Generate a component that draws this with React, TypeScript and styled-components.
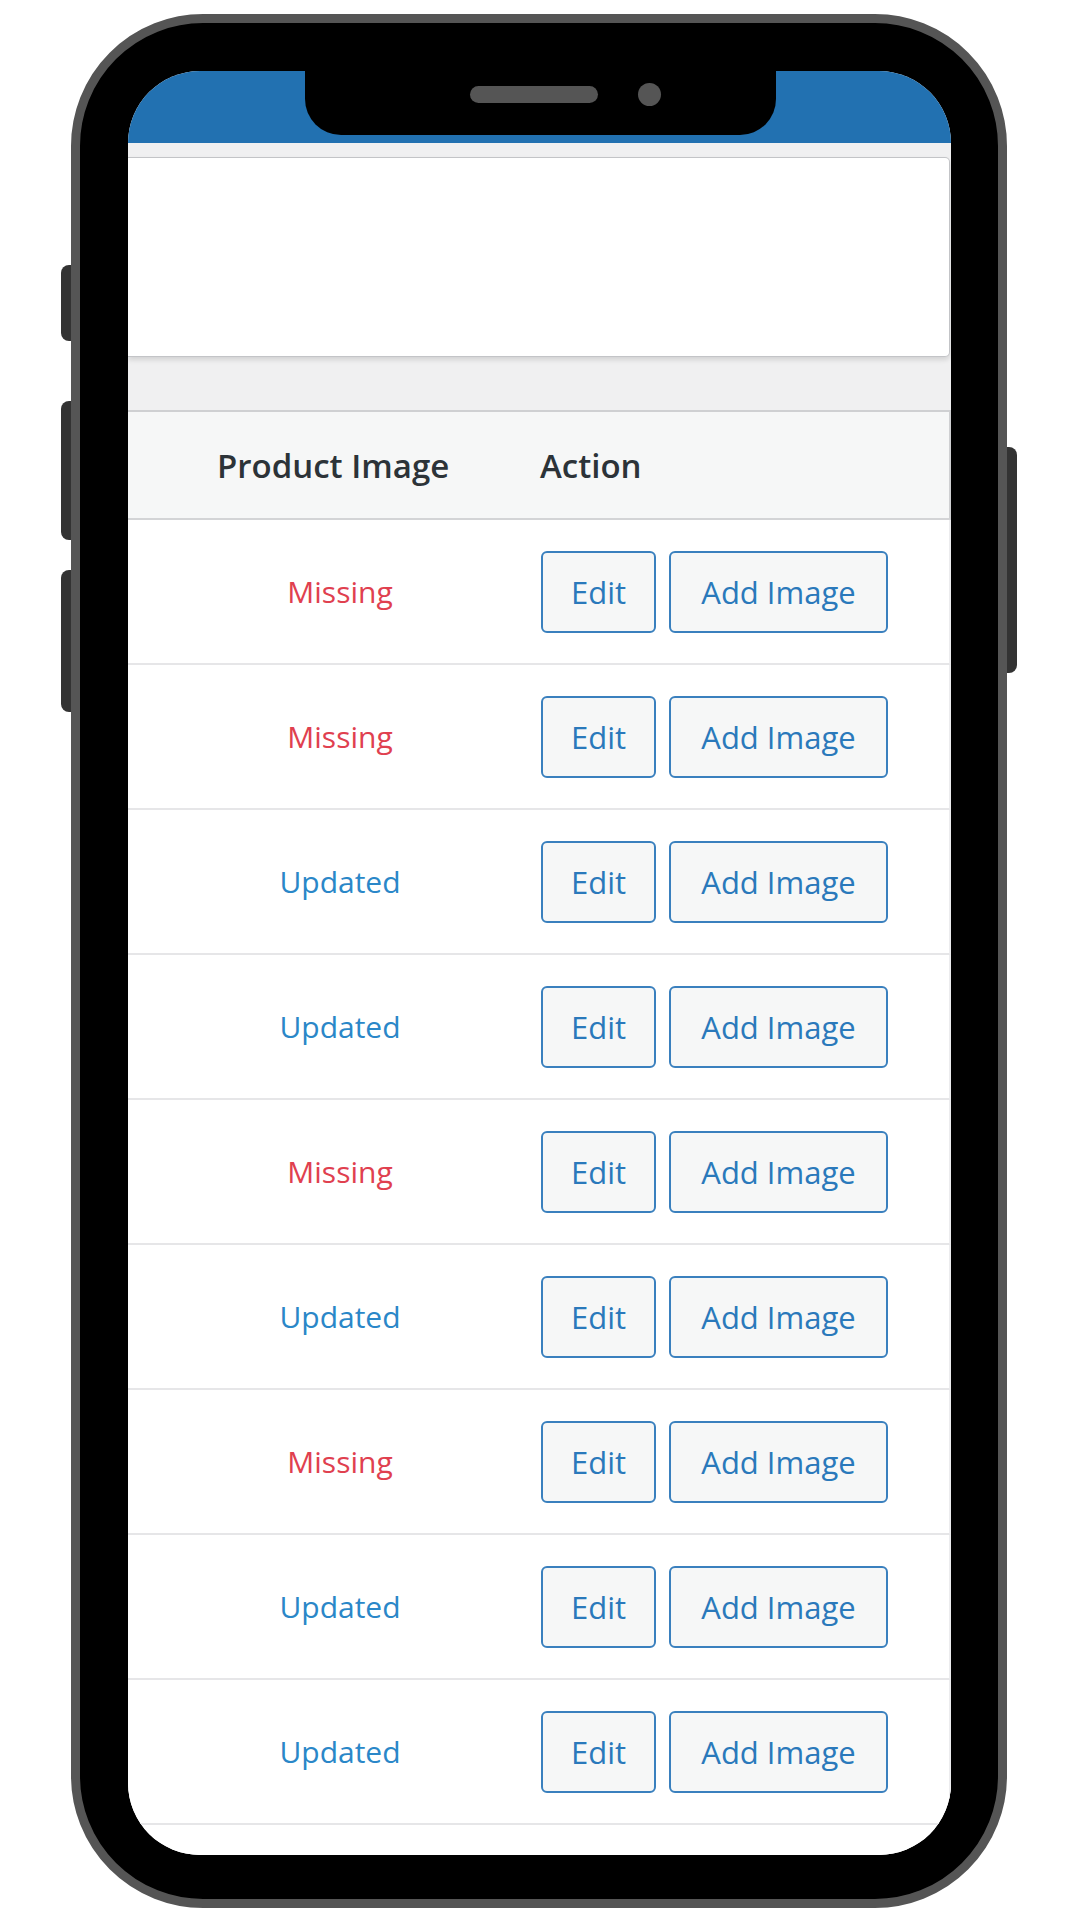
import React from 'react'
import styled, { createGlobalStyle } from 'styled-components'

type Status = 'Missing' | 'Updated'

const rows: Status[] = [
  'Missing',
  'Missing',
  'Updated',
  'Updated',
  'Missing',
  'Updated',
  'Missing',
  'Updated',
  'Updated',
]

const GlobalStyle = createGlobalStyle`
  html, body {
    margin: 0;
    padding: 0;
    background: #fff;
  }
  body {
    font-family: 'Open Sans', 'Noto Sans', sans-serif;
  }
`

const Page = styled.div`
  width: 1080px;
  height: 1920px;
  box-sizing: border-box;
  padding: 14px 0 0 71px;
  overflow: hidden;
`

const Phone = styled.div`
  position: relative;
  width: 936px;
  height: 1894px;
  box-sizing: border-box;
  padding: 48px 47px 44px 48px;
  background: #000;
  border: 9px solid #555;
  border-radius: 132px;
`

const SideKey = styled.div<{ $side: 'left' | 'right'; $top: number; $h: number }>`
  position: absolute;
  top: ${(p) => p.$top}px;
  height: ${(p) => p.$h}px;
  width: 10px;
  background: #333;
  ${(p) =>
    p.$side === 'left'
      ? 'left: -19px; border-radius: 8px 0 0 8px;'
      : 'right: -19px; border-radius: 0 8px 8px 0;'}
`

const Screen = styled.div`
  position: relative;
  width: 823px;
  height: 1784px;
  display: flex;
  flex-direction: column;
  background: #fff;
  border-radius: 72px;
  overflow: hidden;
`

const Notch = styled.div`
  position: absolute;
  top: 0;
  left: 177px;
  width: 471px;
  height: 64px;
  box-sizing: border-box;
  padding: 0 0 17px 165px;
  display: flex;
  align-items: center;
  gap: 40px;
  background: #000;
  border-radius: 0 0 36px 36px;
`

const Speaker = styled.div`
  width: 128px;
  height: 17px;
  border-radius: 9px;
  background: #555;
`

const Camera = styled.div`
  width: 23px;
  height: 23px;
  border-radius: 50%;
  background: #555;
`

const AdminBar = styled.div`
  flex-shrink: 0;
  height: 72px;
  background: #2271b1;
`

const TopArea = styled.div`
  flex-shrink: 0;
  padding: 14px 1px 53px 0;
  background: #f0f0f1;
`

const Card = styled.div`
  height: 200px;
  box-sizing: border-box;
  background: #fff;
  border: 1px solid #c3c4c7;
  border-left: none;
  border-radius: 0 5px 5px 0;
  box-shadow: 0 3px 5px rgba(0, 0, 0, 0.12);
`

const Table = styled.div`
  flex: 1;
  background: #fff;
`

const HeadRow = styled.div`
  height: 110px;
  box-sizing: border-box;
  display: grid;
  grid-template-columns: 246px 1fr;
  column-gap: 77px;
  align-items: center;
  padding-left: 89px;
  background: #f6f7f7;
  border-top: 2px solid #cfd0d2;
  border-bottom: 2px solid #d3d4d6;
  border-right: 2px solid #cfd0d2;
`

const HeadCell = styled.div`
  font-size: 33px;
  font-weight: 600;
  color: #2c3338;
  white-space: nowrap;
`

const Row = styled.div`
  height: 145px;
  box-sizing: border-box;
  display: grid;
  grid-template-columns: 246px 1fr;
  column-gap: 78px;
  align-items: center;
  padding-left: 89px;
  border-bottom: 2px solid #e6e6e8;
  border-right: 2px solid #ececee;
`

const StatusText = styled.div<{ $status: Status }>`
  text-align: center;
  font-size: 30px;
  color: ${(p) => (p.$status === 'Missing' ? '#e0404f' : '#2a87c8')};
`

const Actions = styled.div`
  display: flex;
  gap: 13px;
`

const ActionButton = styled.button<{ $w: number }>`
  width: ${(p) => p.$w}px;
  height: 82px;
  box-sizing: border-box;
  padding: 0;
  font-family: inherit;
  font-size: 31px;
  color: #2a79bb;
  background: #f6f7f7;
  border: 2px solid #3a80be;
  border-radius: 6px;
  cursor: pointer;
`

export default function App() {
  return (
    <Page>
      <GlobalStyle />
      <Phone>
        <SideKey $side='left' $top={242} $h={76} />
        <SideKey $side='left' $top={378} $h={139} />
        <SideKey $side='left' $top={547} $h={142} />
        <SideKey $side='right' $top={424} $h={226} />
        <Screen>
          <AdminBar />
          <TopArea>
            <Card />
          </TopArea>
          <Table>
            <HeadRow>
              <HeadCell>Product Image</HeadCell>
              <HeadCell>Action</HeadCell>
            </HeadRow>
            {rows.map((status, i) => (
              <Row key={i}>
                <StatusText $status={status}>{status}</StatusText>
                <Actions>
                  <ActionButton $w={115}>Edit</ActionButton>
                  <ActionButton $w={219}>Add Image</ActionButton>
                </Actions>
              </Row>
            ))}
          </Table>
          <Notch>
            <Speaker />
            <Camera />
          </Notch>
        </Screen>
      </Phone>
    </Page>
  )
}
